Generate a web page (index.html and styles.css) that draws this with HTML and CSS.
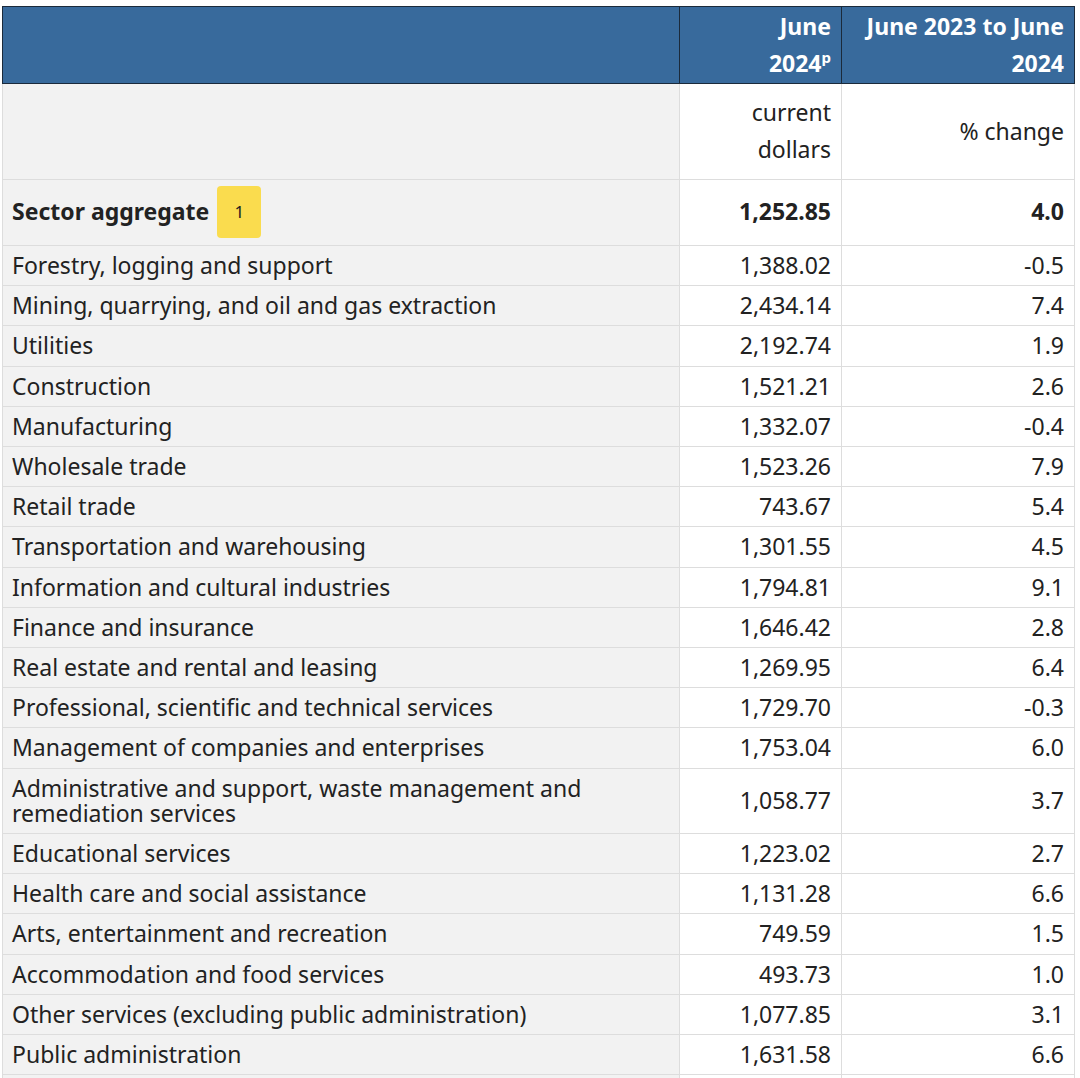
FILE: index.html
```html
<!DOCTYPE html>
<html lang="en">
<head>
<meta charset="utf-8">
<title>Average weekly earnings by industry</title>
<link rel="stylesheet" href="styles.css">
</head>
<body>
<div class="wrap">
<table class="data">
  <colgroup>
    <col class="c-label">
    <col class="c-val">
    <col class="c-chg">
  </colgroup>
  <thead>
    <tr class="head">
      <th class="lbl"></th>
      <th>June<br>2024<sup>p</sup></th>
      <th>June 2023 to June 2024</th>
    </tr>
  </thead>
  <tbody>
    <tr class="units">
      <th class="lbl"></th>
      <td>current dollars</td>
      <td class="mid">% change</td>
    </tr>
    <tr class="agg">
      <th class="lbl"><span class="agg-name">Sector aggregate</span><span class="badge">1</span></th>
      <td>1,252.85</td>
      <td>4.0</td>
    </tr>
    <tr><th class="lbl">Forestry, logging and support</th><td>1,388.02</td><td>-0.5</td></tr>
    <tr><th class="lbl">Mining, quarrying, and oil and gas extraction</th><td>2,434.14</td><td>7.4</td></tr>
    <tr><th class="lbl">Utilities</th><td>2,192.74</td><td>1.9</td></tr>
    <tr><th class="lbl">Construction</th><td>1,521.21</td><td>2.6</td></tr>
    <tr><th class="lbl">Manufacturing</th><td>1,332.07</td><td>-0.4</td></tr>
    <tr><th class="lbl">Wholesale trade</th><td>1,523.26</td><td>7.9</td></tr>
    <tr><th class="lbl">Retail trade</th><td>743.67</td><td>5.4</td></tr>
    <tr><th class="lbl">Transportation and warehousing</th><td>1,301.55</td><td>4.5</td></tr>
    <tr><th class="lbl">Information and cultural industries</th><td>1,794.81</td><td>9.1</td></tr>
    <tr><th class="lbl">Finance and insurance</th><td>1,646.42</td><td>2.8</td></tr>
    <tr><th class="lbl">Real estate and rental and leasing</th><td>1,269.95</td><td>6.4</td></tr>
    <tr><th class="lbl">Professional, scientific and technical services</th><td>1,729.70</td><td>-0.3</td></tr>
    <tr><th class="lbl">Management of companies and enterprises</th><td>1,753.04</td><td>6.0</td></tr>
    <tr><th class="lbl">Administrative and support, waste management and remediation services</th><td class="mid">1,058.77</td><td class="mid">3.7</td></tr>
    <tr><th class="lbl">Educational services</th><td>1,223.02</td><td>2.7</td></tr>
    <tr><th class="lbl">Health care and social assistance</th><td>1,131.28</td><td>6.6</td></tr>
    <tr><th class="lbl">Arts, entertainment and recreation</th><td>749.59</td><td>1.5</td></tr>
    <tr><th class="lbl">Accommodation and food services</th><td>493.73</td><td>1.0</td></tr>
    <tr><th class="lbl">Other services (excluding public administration)</th><td>1,077.85</td><td>3.1</td></tr>
    <tr><th class="lbl">Public administration</th><td>1,631.58</td><td>6.6</td></tr>
    <tr class="spacer"><th class="lbl">&nbsp;</th><td>&nbsp;</td><td>&nbsp;</td></tr>
  </tbody>
</table>
</div>
</body>
</html>
```
FILE: styles.css
```css
html, body {
  margin: 0;
  padding: 0;
  background: #ffffff;
}

body {
  font-family: "Noto Sans", "Open Sans", sans-serif;
  color: #222222;
  font-size: 23px;
}

.wrap {
  padding: 6px 6px 0 2px;
}

.data {
  width: 1072px;
  border-collapse: collapse;
  table-layout: fixed;
  border-top: 1px solid #666666;
}

.c-label { width: 677px; }
.c-val { width: 162px; }
.c-chg { width: 233px; }

.data th,
.data td {
  border: 1px solid #dddddd;
  padding: 7px 10px 7px 9px;
  line-height: 25.2px;
  font-weight: normal;
  text-align: right;
  vertical-align: top;
}

.data th.lbl {
  text-align: left;
  background: #f2f2f2;
}

.data tr.head th {
  background: #386a9c;
  color: #ffffff;
  font-weight: bold;
  line-height: 37px;
  padding: 1px 10px 1px 9px;
  vertical-align: top;
  border: 1px solid #1b2a3b;
}

.data tr.head th.lbl {
  background: #386a9c;
}

.data tr.head sup {
  font-size: 15px;
  line-height: 0;
  vertical-align: 9px;
}

.data tr.units th,
.data tr.units td {
  line-height: 37px;
  padding: 10px 10px 11px 9px;
}

.data td.mid {
  vertical-align: middle;
}

.data tr.agg th,
.data tr.agg td {
  font-weight: bold;
  padding: 6px 10px 7px 9px;
  vertical-align: middle;
}

.agg-name {
  vertical-align: middle;
}

.badge {
  display: inline-flex;
  align-items: center;
  justify-content: center;
  width: 44px;
  height: 52px;
  margin-left: 8px;
  background: #fadc4e;
  border-radius: 4px;
  color: #222222;
  font-weight: normal;
  font-size: 17px;
  vertical-align: middle;
}
```
